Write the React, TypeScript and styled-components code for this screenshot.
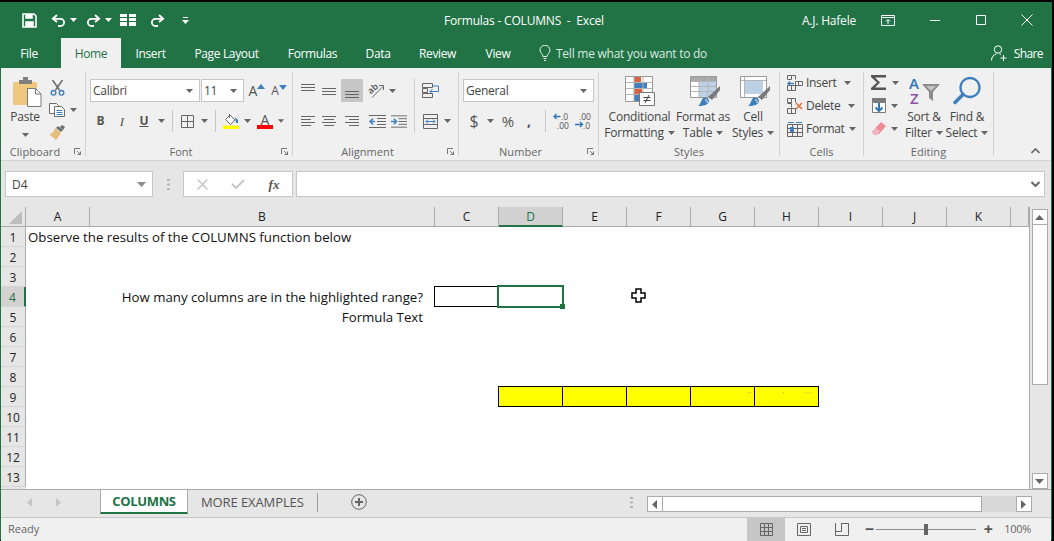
import React from "react";
import styled, { createGlobalStyle } from "styled-components";

const GREEN = "#217346";
const UI_FONT = '"Open Sans", "Noto Sans", sans-serif';

const GlobalStyle = createGlobalStyle`
  html, body {
    margin: 0;
    padding: 0;
    background: #000;
    width: 1054px;
    height: 541px;
    overflow: hidden;
  }
  * { box-sizing: border-box; }
  svg { display: block; }
`;

const Slot = styled.div<{ $w: number; $ml?: number }>`
  flex: none;
  width: ${(p) => p.$w}px;
  margin-left: ${(p) => p.$ml ?? 0}px;
  height: 100%;
  display: flex;
  align-items: center;
  justify-content: center;
`;

/* ---------- icons ---------- */

const Caret = ({ color = "#666" }: { color?: string }) => (
  <svg width="7" height="4" viewBox="0 0 7 4">
    <path d="M0 0h7L3.5 4z" fill={color} />
  </svg>
);

const Save = () => (
  <svg width="15" height="15" viewBox="0 0 15 15" fill="none" stroke="#fff" strokeWidth="1.6">
    <path d="M1 1h11l2 2v11H1z" />
    <path d="M4 1v4h6V1" fill="#fff" />
    <path d="M4 14V9h7v5" fill="#fff" />
  </svg>
);

const Undo = ({ flip }: { flip?: boolean }) => (
  <svg width="15" height="13" viewBox="0 0 15 13" fill="none" stroke="#fff" strokeWidth="1.8" style={flip ? { transform: "scaleX(-1)" } : undefined}>
    <path d="M6 1 1.8 4.8 6 8" />
    <path d="M2 4.8h7.5a3.6 3.6 0 0 1 0 7.2H7" />
  </svg>
);

const Freeze = () => (
  <svg width="16" height="12" viewBox="0 0 16 12" fill="#fff">
    <path d="M0 0h7v3H0zM9 0h7v3H9zM0 4h7v3H0zM9 4h7v3H9zM0 8h7v4H0zM9 8h7v4H9z" />
  </svg>
);

const Customize = () => (
  <svg width="7" height="7" viewBox="0 0 7 7" fill="#fff">
    <path d="M1 0h5v1H1zM0 3h7L3.5 7z" />
  </svg>
);

const RibbonDisplay = () => (
  <svg width="14" height="11" viewBox="0 0 14 11" fill="none" stroke="#fff">
    <path d="M.5.5h13v10H.5zM.5 2.5h13" />
    <path d="M7 9V4.5M5 6.5l2-2 2 2" />
  </svg>
);

const Minimize = () => (
  <svg width="10" height="1" viewBox="0 0 10 1">
    <path d="M0 0h10v1H0z" fill="#fff" />
  </svg>
);

const Maximize = () => (
  <svg width="10" height="10" viewBox="0 0 10 10" fill="none" stroke="#fff">
    <path d="M.5.5h9v9h-9z" />
  </svg>
);

const Close = () => (
  <svg width="12" height="12" viewBox="0 0 12 12" fill="none" stroke="#fff">
    <path d="M.5.5l11 11M11.500.5l-11 11" />
  </svg>
);

const Bulb = () => (
  <svg width="12" height="16" viewBox="0 0 12 16" fill="none" stroke="#e8f1eb">
    <path d="M4 11.500C4 9 1 8 1 5.200a5 5 0 0 1 10 0C11 8 8 9 8 11.500z" />
    <path d="M4.500 13.500h3M5 15.500h2" />
  </svg>
);

const ShareUser = () => (
  <svg width="17" height="16" viewBox="0 0 17 16" fill="none" stroke="#fff">
    <circle cx="7" cy="4.500" r="3.700" />
    <path d="M.5 15.500c0-3.500 2-6 5-6.500M8.500 9l1.500.5" />
    <path d="M12.500 10v6M9.500 13h6" />
  </svg>
);

const PasteIcon = () => (
  <svg width="29" height="31" viewBox="0 0 29 31">
    <rect x="0" y="6" width="24" height="23" rx="1.500" fill="#edc87e" />
    <path d="M6 4h4V1h5v3h4v4H6z" fill="#7f7f7f" />
    <path d="M14.500 12.500h8l5.500 5.500v12.500H14.500z" fill="#fff" stroke="#7a7a7a" />
    <path d="M22.500 12.500V18H28" fill="none" stroke="#7a7a7a" />
  </svg>
);

const Cut = () => (
  <svg width="15" height="16" viewBox="0 0 15 16" fill="none">
    <path d="M2.500 0l7 10M12.500 0l-7 10" stroke="#6d6d6d" strokeWidth="1.600" />
    <circle cx="3.500" cy="12.800" r="2.300" stroke="#3f7fbd" strokeWidth="1.400" />
    <circle cx="11.500" cy="12.800" r="2.300" stroke="#3f7fbd" strokeWidth="1.400" />
  </svg>
);

const Copy = () => (
  <svg width="16" height="14" viewBox="0 0 16 14" fill="#fff" stroke="#6d6d6d">
    <path d="M.5.5h7l2 2v8h-9z" />
    <path d="M5.500 3.500h7l3 3v7h-10z" />
    <path d="M7.500 7.500h6M7.500 9.500h6M7.500 11.500h6" stroke="#3f7fbd" />
  </svg>
);

const Painter = () => (
  <svg width="16" height="15" viewBox="0 0 16 15">
    <path d="M9 1l5 4-2 2-5-4z" fill="#6d6d6d" />
    <path d="M13 0l3 2-2 3-3-3z" fill="#6d6d6d" />
    <path d="M6 3l6 5-5 7-7-6c3 0 5-2 6-6z" fill="#e5bd7a" />
  </svg>
);

const Launcher = () => (
  <svg width="7" height="7" viewBox="0 0 7 7" fill="none" stroke="#777">
    <path d="M.5 6V.5H6" />
    <path d="M3 3l3.500 3.500M6.500 3.500v3h-3" />
  </svg>
);

const GrowFont = ({ up }: { up?: boolean }) => (
  <svg width="8" height="5" viewBox="0 0 8 5">
    <path d={up ? "M0 5h8L4 0z" : "M0 0h8L4 5z"} fill="#3f7fbd" />
  </svg>
);

const Borders = () => (
  <svg width="13" height="13" viewBox="0 0 13 13" fill="none" stroke="#666">
    <path d="M.5.5h12v12H.5zM6.500.5v12M.5 6.500h12" />
  </svg>
);

const FillColor = () => (
  <svg width="16" height="15" viewBox="0 0 16 15">
    <path d="M7 1l5 5-4.500 4.500L2.500 5.500z" fill="#fff" stroke="#666" />
    <path d="M6 0h1v4H6z" fill="#666" />
    <path d="M12 3l3 3v3h-2z" fill="#3f7fbd" />
    <rect y="11.500" width="16" height="3.500" fill="#ffff00" />
  </svg>
);

const FontColorBar = styled.div`
  width: 16px;
  height: 4px;
  background: #ff0000;
  margin-top: -2px;
`;

const Lines = ({ ys, xs, w = 14, h = 14 }: { ys: number[]; xs: [number, number][]; w?: number; h?: number }) => (
  <svg width={w} height={h} viewBox={`0 0 ${w} ${h}`} stroke="#666">
    {ys.map((y, i) => (
      <path key={y} d={`M${xs[i][0]} ${y + 0.5}H${xs[i][1]}`} />
    ))}
  </svg>
);

const full: [number, number] = [0, 14];

const Orientation = () => (
  <svg width="17" height="15" viewBox="0 0 17 15" fill="none" overflow="visible">
    <text x="0.500" y="9" transform="rotate(-42 5.500 6)" fontFamily={UI_FONT} fontSize="9" fontWeight="600" fill="#555">ab</text>
    <path d="M5 14.500L16 3.500" stroke="#666" />
    <path d="M12 2.500h4.500v4.500" stroke="#666" />
  </svg>
);

const Indent = ({ inward }: { inward?: boolean }) => (
  <svg width="17" height="13" viewBox="0 0 17 13" stroke="#666" fill="none">
    <path d="M0 .5h17M0 12.500h17M8 3.500h9M8 6.500h9M8 9.500h9" />
    <path d={inward ? "M0 6.500h5M3 3.500l3 3-3 3" : "M1 6.500h5M4 3.500l-3 3 3 3"} stroke="#3f7fbd" strokeWidth="1.500" />
  </svg>
);

const WrapText = () => (
  <svg width="17" height="16" viewBox="0 0 17 16" fill="none" stroke="#666">
    <path d="M.5.5h10v4H.5zM.5 5.500h5v4h-5zM.5 10.500h10v4H.5z" />
    <path d="M10.500 3h6M16.500 3v5.500H8M10.500 6l-2.500 2.500 2.500 2.500" stroke="#3f7fbd" />
  </svg>
);

const Merge = () => (
  <svg width="15" height="15" viewBox="0 0 15 15" fill="none" stroke="#666">
    <path d="M.5.5h14v14H.5zM.5 4.500h14M.5 10.500h14" />
    <path d="M3 7.500h9M5 5.500l-2 2 2 2M10 5.500l2 2-2 2" stroke="#3f7fbd" />
  </svg>
);

const DecimalIcon = ({ more }: { more?: boolean }) => (
  <svg width="17" height="18" viewBox="0 0 17 18">
    <text x={more ? 4 : 8} y="7.500" fontFamily={UI_FONT} fontSize="8.500" fill="#555">{more ? ".00" : ".0"}</text>
    <text x={more ? 8 : 4} y="16.500" fontFamily={UI_FONT} fontSize="8.500" fill="#555">{more ? ".0" : ".00"}</text>
    <path
      d={more ? "M0 12.500h7M5 10l2.500 2.500L5 15" : "M1 4.500h6.500M3.500 2L1 4.500 3.500 7"}
      stroke="#2f75b5"
      strokeWidth="1.300"
      fill="none"
    />
  </svg>
);

const ConditionalIcon = () => (
  <svg width="30" height="30" viewBox="0 0 30 30">
    <path d="M.5.5h27v25H.5z" fill="#fff" stroke="#999" />
    <path d="M9 1h7v5H9z" fill="#d9633f" />
    <path d="M9 7h13v5H9z" fill="#3f7fbd" />
    <path d="M9 13h8v5H9z" fill="#d9633f" />
    <path d="M9 19h5v6H9z" fill="#3f7fbd" />
    <path d="M1 6.500h26M1 12.500h26M1 18.500h26M9 1v24M18 1v24" stroke="#b5b5b5" />
    <path d="M14.500 16.500h15v13h-15z" fill="#fff" stroke="#777" />
    <path d="M18.500 21.500h7M18.500 24.500h7M24 19l-4 8" stroke="#444" />
  </svg>
);

const Brush = () => (
  <g>
    <path d="M30 10v4l-8 10-4-3z" fill="#7a7a7a" />
    <path d="M13 22c3-1 6 0 6 3s-4 5-11 5c3-2 3-6 5-8z" fill="#3f7fbd" />
    <path d="M15 24c2 0 3 1 2 3" stroke="#fff" fill="none" />
  </g>
);

const TableIcon = () => (
  <svg width="30" height="30" viewBox="0 0 30 30">
    <path d="M.5.500h26v21H.5z" fill="#fff" stroke="#999" />
    <path d="M1 1h25v4H1z" fill="#a9a9a9" />
    <path d="M9 6h17v15H9z" fill="#bdd2e8" />
    <path d="M1 5.500h25M1 10.500h25M1 15.500h25M9 1v20M18 1v20" stroke="#b5b5b5" />
    <Brush />
  </svg>
);

const CellStylesIcon = () => (
  <svg width="30" height="30" viewBox="0 0 30 30">
    <path d="M.5.500h26v21H.5z" fill="#fff" stroke="#999" />
    <path d="M5 5h18v13H5z" fill="#bcd0e6" />
    <path d="M1 4.500h25M4.500 1v20" stroke="#b5b5b5" />
    <Brush />
  </svg>
);

const InsertCells = () => (
  <svg width="16" height="16" viewBox="0 0 16 16" fill="none" stroke="#666">
    <path d="M.5.500h4v4h-4zM4.500.500h4v4M.5 10.500h4v5h-4zM4.500 10.500h4v5h-4z" />
    <path d="M8.500 6.500h7v4h-7zM11.500 6.500v4" />
    <path d="M1 8.500h6M3 6.500l-2 2 2 2" stroke="#3f7fbd" strokeWidth="1.300" />
  </svg>
);

const DeleteCells = () => (
  <svg width="16" height="16" viewBox="0 0 16 16" fill="none" stroke="#666">
    <path d="M.5.500h4v4h-4zM4.500.500h4v4M.5 10.500h4v5h-4zM4.500 10.500h4v5h-4zM.5 5.500h4v4" />
    <path d="M9 5l6 6M15 5l-6 6" stroke="#e2703a" strokeWidth="1.500" />
  </svg>
);

const FormatCells = () => (
  <svg width="16" height="16" viewBox="0 0 16 16" fill="none" stroke="#666">
    <path d="M.5 3.500h15v12H.5zM.5 7.500h15M.5 11.500h15M5.500 3.500v12M10.500 3.500v12" />
    <path d="M3 6h4v5H3z" fill="#3f7fbd" stroke="none" />
    <path d="M1 1.500h6M9 1.500h6" stroke="#3f7fbd" />
  </svg>
);

const Sigma = () => (
  <svg width="16" height="15" viewBox="0 0 16 15">
    <path d="M0 0h15v2.500H4l5 5-5 5h11V15H0v-2l6-5.500L0 2z" fill="#555" />
  </svg>
);

const FillDown = () => (
  <svg width="14" height="15" viewBox="0 0 14 15">
    <path d="M0 0h14v4H0z" fill="#7a7a7a" />
    <path d="M.5 4.500h13v10H.5z" fill="#fff" stroke="#7a7a7a" />
    <path d="M7 5v8M3.500 9.500L7 13l3.500-3.500" stroke="#2f75b5" strokeWidth="2" fill="none" />
  </svg>
);

const Eraser = () => (
  <svg width="14" height="13" viewBox="0 0 14 13">
    <path d="M9 0l5 4-7 8-5 1-2-3z" fill="#ee8a9a" />
    <path d="M0 10l4-4 4 3-3 4H2z" fill="#f4b6c0" />
  </svg>
);

const SortIcon = () => (
  <svg width="31" height="30" viewBox="0 0 31 30">
    <text x="0" y="13" fontFamily={UI_FONT} fontSize="15" fontWeight="600" fill="#2f75b5">A</text>
    <text x="1" y="28" fontFamily={UI_FONT} fontSize="15" fontWeight="600" fill="#8a55a8">Z</text>
    <path d="M13 8h18l-7 8v9l-4-3v-6z" fill="#8c8c8c" />
    <path d="M17 10h10l-5 5z" fill="#c4c4c4" />
  </svg>
);

const FindIcon = () => (
  <svg width="28" height="28" viewBox="0 0 28 28" fill="none">
    <circle cx="17" cy="10.500" r="9.500" stroke="#3f7fbd" strokeWidth="2.300" />
    <path d="M10 17.500l-8 8" stroke="#3f7fbd" strokeWidth="3.500" strokeLinecap="round" />
  </svg>
);

const CollapseChevron = () => (
  <svg width="9" height="6" viewBox="0 0 9 6" fill="none" stroke="#666" strokeWidth="1.600">
    <path d="M.5 5L4.500 1l4 4" />
  </svg>
);

const Cross = () => (
  <svg width="11" height="11" viewBox="0 0 11 11" stroke="#c6c6c6" strokeWidth="1.500">
    <path d="M.5.5l10 10M10.500.5l-10 10" />
  </svg>
);

const Check = () => (
  <svg width="14" height="11" viewBox="0 0 14 11" fill="none" stroke="#c6c6c6" strokeWidth="2">
    <path d="M1 5l4 4 8-8" />
  </svg>
);

const DownChevron = () => (
  <svg width="9" height="6" viewBox="0 0 9 6" fill="none" stroke="#666" strokeWidth="2">
    <path d="M.5 1l4 4 4-4" />
  </svg>
);

const VerticalDots = () => (
  <svg width="3" height="11" viewBox="0 0 3 11" fill="#b5b5b5">
    <path d="M0 0h3v2H0zM0 4.500h3v2H0zM0 9h3v2H0z" />
  </svg>
);

const CornerMark = () => (
  <svg width="13" height="13" viewBox="0 0 13 13">
    <path d="M13 0v13H0z" fill="#bdbdbd" />
  </svg>
);

const Arrow = ({ dir, color = "#666" }: { dir: "up" | "down" | "left" | "right"; color?: string }) => {
  const d = {
    up: "M0 5h9L4.500 0z",
    down: "M0 0h9L4.500 5z",
    left: "M5 0v9L0 4.500z",
    right: "M0 0v9l5-4.500z",
  }[dir];
  const vertical = dir === "up" || dir === "down";
  return (
    <svg width={vertical ? 9 : 5} height={vertical ? 5 : 9} viewBox={vertical ? "0 0 9 5" : "0 0 5 9"}>
      <path d={d} fill={color} />
    </svg>
  );
};

const AddSheet = () => (
  <svg width="16" height="16" viewBox="0 0 16 16" fill="none" stroke="#666">
    <circle cx="8" cy="8" r="7.300" />
    <path d="M4 8h8M8 4v8" strokeWidth="2" />
  </svg>
);

const NormalView = () => (
  <svg width="13" height="13" viewBox="0 0 13 13" fill="none" stroke="#666">
    <path d="M.5.500h12v12H.5zM4.500.500v12M8.500.500v12M.5 4.500h12M.5 8.500h12" />
  </svg>
);

const PageLayoutView = () => (
  <svg width="14" height="13" viewBox="0 0 14 13" fill="none" stroke="#666">
    <path d="M.5.500h13v12H.5zM3.500 3.500h7v6h-7zM5 5.500h4M5 7.500h4" />
  </svg>
);

const PageBreakView = () => (
  <svg width="14" height="13" viewBox="0 0 14 13" fill="none" stroke="#666">
    <path d="M.5 0v12.500h13V0M.5 8.500h6V0M6.500.500h7" />
  </svg>
);

const CursorCross = () => (
  <svg width="15" height="15" viewBox="0 0 15 15">
    <path d="M5 1h5v4h4v5h-4v4H5v-4H1V5h4z" fill="#fff" stroke="#000" strokeWidth="1.500" />
  </svg>
);

/* ---------- window chrome ---------- */

const Window = styled.div`
  width: 1052px;
  height: 538px;
  margin: 2px 2px 1px 0;
  display: flex;
  flex-direction: column;
  border: 1px solid ${GREEN};
  border-top: 0;
  font-family: ${UI_FONT};
  background: #e6e6e6;
`;

const TitleBar = styled.div`
  flex: none;
  height: 36px;
  background: ${GREEN};
  color: #fff;
  display: flex;
  align-items: center;
  font-size: 12px;
`;

const QuickAccess = styled.div`
  flex: none;
  width: 443px;
  height: 36px;
  padding-left: 17px;
  display: flex;
`;

const DocTitle = styled.div`
  white-space: pre;
  letter-spacing: -0.2px;
`;

const Account = styled.div`
  margin-left: auto;
  margin-right: 10px;
  letter-spacing: -0.2px;
`;

const WindowControls = styled.div`
  display: flex;
  height: 36px;
  padding-right: 1px;
`;

const TabRow = styled.div`
  flex: none;
  height: 30px;
  background: ${GREEN};
  display: flex;
  align-items: stretch;
  font-size: 12px;
  color: #fff;
`;

const Tab = styled.div<{ $w: number; $active?: boolean }>`
  width: ${(p) => p.$w}px;
  display: flex;
  align-items: center;
  justify-content: center;
  letter-spacing: -0.35px;
  white-space: nowrap;
  background: ${(p) => (p.$active ? "#f0f0f0" : "transparent")};
  color: ${(p) => (p.$active ? GREEN : "#fff")};
`;

const FileTab = styled(Tab)`
  margin-right: 4px;
`;

const TellMe = styled.div`
  margin-left: 14px;
  display: flex;
  align-items: center;
  gap: 5px;
  color: #dce9e1;
  letter-spacing: -0.25px;
`;

const ShareButton = styled.div`
  margin-left: auto;
  padding-right: 8px;
  display: flex;
  align-items: center;
  gap: 6px;
  letter-spacing: -0.6px;
`;

/* ---------- ribbon ---------- */

const Ribbon = styled.div`
  flex: none;
  height: 93px;
  background: #f0f0f0;
  border-bottom: 1px solid #d2d2d2;
  display: flex;
  font-size: 12px;
  color: #444;
`;

const Group = styled.div<{ $w: number }>`
  flex: none;
  width: ${(p) => p.$w}px;
  height: 92px;
  display: flex;
  flex-direction: column;
`;

const GroupBody = styled.div<{ $pl?: number; $pt?: number }>`
  flex: 1;
  display: flex;
  padding-left: ${(p) => p.$pl ?? 0}px;
  padding-top: ${(p) => p.$pt ?? 0}px;
  min-height: 0;
`;

const GroupLabel = styled.div`
  flex: none;
  height: 17px;
  padding-bottom: 1px;
  display: flex;
  align-items: center;
  font-size: 11px;
  color: #666;
  letter-spacing: 0.05px;
`;

const LabelText = styled.div`
  flex: 1;
  text-align: center;
`;

const LauncherSlot = styled.div`
  flex: none;
  width: 16px;
  display: flex;
  justify-content: center;
`;

const GroupDivider = styled.div`
  flex: none;
  width: 1px;
  margin: 4px 0;
  background: #d2d2d2;
`;

const InnerDivider = styled.div`
  width: 1px;
  height: 22px;
  background: #c6c6c6;
`;

const TallDivider = styled.div`
  flex: none;
  width: 1px;
  height: 55px;
  margin-top: -1px;
  background: #d2d2d2;
`;

const Column = styled.div<{ $w?: number; $mt?: number }>`
  flex: none;
  width: ${(p) => (p.$w ? `${p.$w}px` : "auto")};
  margin-top: ${(p) => p.$mt ?? 0}px;
  display: flex;
  flex-direction: column;
`;

const Row = styled.div<{ $h?: number; $mt?: number }>`
  display: flex;
  align-items: center;
  height: ${(p) => p.$h ?? 23}px;
  margin-top: ${(p) => p.$mt ?? 0}px;
`;

const LargeButton = styled.div<{ $w: number }>`
  flex: none;
  width: ${(p) => p.$w}px;
  display: flex;
  flex-direction: column;
  align-items: center;
  letter-spacing: -0.2px;
  line-height: 16px;
  white-space: nowrap;
`;

const LargeIcon = styled.div<{ $ml?: number }>`
  height: 34px;
  margin-bottom: 1px;
  margin-left: ${(p) => p.$ml ?? 0}px;
  display: flex;
  align-items: center;
  justify-content: center;
`;

const CaretLine = styled.div`
  display: flex;
  align-items: center;
  gap: 4px;
`;

const PasteCaret = styled.div`
  margin-top: 8px;
`;

const SmallTools = styled.div`
  flex: none;
  padding-top: 3px;
  width: 36px;
  display: flex;
  flex-direction: column;
`;

const FieldBox = styled.div<{ $w: number; $ml?: number }>`
  flex: none;
  width: ${(p) => p.$w}px;
  margin-left: ${(p) => p.$ml ?? 0}px;
  height: 23px;
  background: #fff;
  border: 1px solid #c6c6c6;
  display: flex;
  align-items: center;
  justify-content: space-between;
  padding: 0 6px 0 2px;
  font-size: 12px;
  color: #444;
  letter-spacing: -0.25px;
`;

const Glyph = styled.span<{ $size?: number; $bold?: boolean; $italic?: boolean; $underline?: boolean; $serif?: boolean }>`
  font-size: ${(p) => p.$size ?? 12}px;
  font-weight: ${(p) => (p.$bold ? 700 : 400)};
  font-style: ${(p) => (p.$italic ? "italic" : "normal")};
  text-decoration: ${(p) => (p.$underline ? "underline" : "none")};
  font-family: ${(p) => (p.$serif ? '"Liberation Serif", serif' : UI_FONT)};
  color: #555;
  line-height: 1;
`;

const GrowGlyph = styled.div`
  display: flex;
  align-items: flex-start;
  gap: 0;
`;

const ColorGlyph = styled.div`
  display: flex;
  flex-direction: column;
  align-items: center;
`;

const ActiveSlot = styled(Slot)`
  background: #c6c6c6;
  height: 23px;
`;

const CellRow = styled.div`
  display: flex;
  align-items: center;
  height: 23px;
  gap: 3px;
  letter-spacing: -0.3px;
`;

const CellCaret = styled.div<{ $ml: number }>`
  margin-left: ${(p) => p.$ml}px;
  display: flex;
`;

const Collapse = styled.div`
  margin-left: 37px;
  align-self: flex-end;
  height: 16px;
  display: flex;
  align-items: center;
  margin-bottom: 1px;
`;

/* ---------- formula bar ---------- */

const FormulaRow = styled.div`
  flex: none;
  height: 46px;
  padding: 10px 5px 10px 4px;
  display: flex;
  background: #e6e6e6;
`;

const NameBox = styled.div`
  flex: none;
  width: 148px;
  background: #fff;
  border: 1px solid #c6c6c6;
  display: flex;
  align-items: center;
  justify-content: space-between;
  padding: 0 6px 0 6px;
  font-size: 12px;
  color: #444;
`;

const FormulaDots = styled.div`
  flex: none;
  width: 30px;
  display: flex;
  align-items: center;
  justify-content: center;
`;

const FormulaTools = styled.div`
  flex: none;
  width: 110px;
  background: #fff;
  border: 1px solid #c6c6c6;
  display: flex;
  align-items: center;
  padding-left: 0;
`;

const FormulaInput = styled.div`
  flex: none;
  width: 749px;
  margin-left: 3px;
  background: #fff;
  border: 1px solid #c6c6c6;
  display: flex;
  align-items: center;
  justify-content: flex-end;
  padding-right: 4px;
`;

/* ---------- sheet ---------- */

const SheetArea = styled.div`
  flex: none;
  height: 282px;
  display: flex;
  background: #e6e6e6;
`;

const columns = ["A", "B", "C", "D", "E", "F", "G", "H", "I", "J", "K", ""];
const columnWidths = [64, 345, 64, 64, 64, 64, 64, 64, 64, 64, 64, 18];
const rows = Array.from({ length: 13 }, (_, i) => i + 1);

const SheetGrid = styled.div`
  flex: none;
  width: 1029px;
  height: 282px;
  border-right: 1px solid #ababab;
  display: grid;
  grid-template-columns: 25px ${columnWidths.map((w) => `${w}px`).join(" ")};
  grid-template-rows: 20px repeat(13, 20px);
  background: linear-gradient(to right, #e6e6e6 25px, #fff 25px);
  overflow: hidden;
  font-family: "Open Sans", sans-serif;
  font-size: 13.25px;
  color: #111;
`;

const CornerCell = styled.div`
  background: #e6e6e6;
  border-right: 1px solid #ababab;
  border-bottom: 1px solid #ababab;
  display: flex;
  align-items: flex-end;
  justify-content: flex-end;
  padding: 0 3px 2px 0;
`;

const ColumnHead = styled.div<{ $active?: boolean }>`
  background: ${(p) => (p.$active ? "#d2d2d2" : "#e6e6e6")};
  border-right: 1px solid #ababab;
  border-bottom: ${(p) => (p.$active ? `2px solid ${GREEN}` : "1px solid #ababab")};
  color: ${(p) => (p.$active ? GREEN : "#222")};
  display: flex;
  align-items: center;
  justify-content: center;
  font-size: 12px;
`;

const RowHead = styled.div<{ $active?: boolean }>`
  background: ${(p) => (p.$active ? "#d2d2d2" : "#e6e6e6")};
  border-right: ${(p) => (p.$active ? `2px solid ${GREEN}` : "1px solid #ababab")};
  border-bottom: 1px solid #d6d6d6;
  color: ${(p) => (p.$active ? GREEN : "#222")};
  display: flex;
  align-items: center;
  justify-content: center;
  font-size: 12px;
  padding-top: 1px;
`;

const Cell = styled.div<{ $right?: boolean; $indent?: number; $yellow?: boolean; $boxed?: boolean }>`
  position: relative;
  min-width: 0;
  display: flex;
  align-items: center;
  justify-content: ${(p) => (p.$right ? "flex-end" : "flex-start")};
  padding: ${(p) => (p.$right ? `0 ${p.$indent ?? 0}px 0 0` : "0 0 0 2px")};
  white-space: nowrap;
  background: ${(p) => (p.$yellow ? "#ffff00" : "transparent")};
  &::after {
    content: ${(p) => (p.$boxed ? '""' : "none")};
    position: absolute;
    inset: -1px 0 0 -1px;
    border: 1px solid #000;
    pointer-events: none;
  }
`;

const Selection = styled.div`
  position: absolute;
  inset: -2px -1px -1px -2px;
  border: 2px solid ${GREEN};
  z-index: 2;
`;

const FillHandle = styled.div`
  position: absolute;
  right: -3px;
  bottom: -3px;
  width: 5px;
  height: 5px;
  background: ${GREEN};
`;

const Speck = styled.i<{ $x: number }>`
  position: absolute;
  top: 5px;
  left: ${(p) => p.$x}px;
  width: 1px;
  height: 1px;
  background: #e8a060;
  z-index: 1;
`;

const CursorMark = styled.div`
  position: absolute;
  left: 4px;
  top: 1px;
  z-index: 3;
`;

const VScrollbar = styled.div`
  flex: none;
  width: 21px;
  display: flex;
  flex-direction: column;
  align-items: center;
  padding: 2px 2px 0 0;
`;

const ScrollButton = styled.div`
  flex: none;
  width: 16px;
  height: 16px;
  background: #fff;
  border: 1px solid #ababab;
  display: flex;
  align-items: center;
  justify-content: center;
`;

const VThumb = styled.div`
  flex: none;
  width: 16px;
  height: 161px;
  margin-top: -1px;
  background: #fff;
  border: 1px solid #ababab;
`;

const VTrack = styled.div`
  flex: 1;
`;

/* ---------- sheet tabs ---------- */

const TabBar = styled.div`
  flex: none;
  height: 29px;
  background: #e6e6e6;
  border-top: 1px solid #ababab;
  border-bottom: 1px solid #c6c6c6;
  display: flex;
  align-items: flex-start;
  font-size: 13px;
`;

const TabNav = styled.div`
  flex: none;
  width: 99px;
  height: 24px;
  display: flex;
`;

const SheetTab = styled.div<{ $active?: boolean }>`
  flex: none;
  height: 24px;
  display: flex;
  align-items: center;
  justify-content: center;
  width: ${(p) => (p.$active ? "88px" : "auto")};
  background: ${(p) => (p.$active ? "#fff" : "transparent")};
  color: ${(p) => (p.$active ? GREEN : "#555")};
  font-weight: ${(p) => (p.$active ? 700 : 400)};
  border-bottom: ${(p) => (p.$active ? `2px solid ${GREEN}` : "0")};
  border-left: ${(p) => (p.$active ? "1px solid #ababab" : "0")};
  border-right: ${(p) => (p.$active ? "1px solid #ababab" : "0")};
  padding: ${(p) => (p.$active ? "0" : "0 13px")};
  letter-spacing: ${(p) => (p.$active ? "-0.35px" : "-0.1px")};
  white-space: nowrap;
`;

const TabDivider = styled.div`
  flex: none;
  width: 1px;
  height: 19px;
  margin-top: 3px;
  background: #9f9f9f;
`;

const TabTools = styled.div`
  flex: none;
  height: 24px;
  display: flex;
`;

const HScrollbar = styled.div`
  flex: none;
  margin-left: 14px;
  margin-top: 6px;
  display: flex;
  height: 16px;
`;

const HThumb = styled.div`
  width: 320px;
  background: #fff;
  border: 1px solid #ababab;
  margin-left: -1px;
`;

const HTrack = styled.div`
  width: 34px;
  background: #d8d8d8;
`;

/* ---------- status bar ---------- */

const StatusBar = styled.div`
  flex: 1;
  background: #f0f0f0;
  display: flex;
  align-items: stretch;
  font-size: 11px;
  color: #666;
`;

const StatusText = styled.div`
  padding: 0 0 4px 7px;
  display: flex;
  align-items: center;
`;

const StatusTools = styled.div`
  margin-left: auto;
  padding-right: 20px;
  display: flex;
  align-items: stretch;
`;

const ViewButton = styled.div<{ $active?: boolean }>`
  width: 38px;
  padding-bottom: 2px;
  display: flex;
  align-items: center;
  justify-content: center;
  background: ${(p) => (p.$active ? "#c6c6c6" : "transparent")};
`;

const ZoomMark = styled.div<{ $ml: number }>`
  margin-left: ${(p) => p.$ml}px;
  width: 8px;
  padding-bottom: 3px;
  display: flex;
  align-items: center;
  justify-content: center;
  font-size: 16px;
  font-weight: 700;
  color: #555;
`;

const ZoomTrack = styled.div`
  position: relative;
  width: 100px;
  margin: 0 0 2px 3px;
  align-self: center;
  height: 1px;
  background: #8c8c8c;
`;

const ZoomThumb = styled.div`
  position: absolute;
  left: 48px;
  top: -5px;
  width: 4px;
  height: 11px;
  background: #666;
`;

const ZoomValue = styled.div`
  margin-left: 12px;
  padding-bottom: 4px;
  display: flex;
  align-items: center;
  letter-spacing: -0.3px;
`;

const cellContent: Record<string, { text: string; right?: boolean; indent?: number }> = {
  "A1": { text: "Observe the results of the COLUMNS function below" },
  "B4": { text: "How many columns are in the highlighted range?", right: true, indent: 12 },
  "B5": { text: "Formula Text", right: true, indent: 12 },
};

const yellowColumns = ["D", "E", "F", "G", "H"];

const specks: Record<string, number[]> = { G: [57, 59], H: [28, 51, 54] };

export default function App() {
  return (
    <>
      <GlobalStyle />
      <Window>
        <TitleBar>
          <QuickAccess>
            <Slot $w={22}><Save /></Slot>
            <Slot $w={20} $ml={8}><Undo /></Slot>
            <Slot $w={10}><Caret color="#fff" /></Slot>
            <Slot $w={20} $ml={5}><Undo flip /></Slot>
            <Slot $w={10}><Caret color="#fff" /></Slot>
            <Slot $w={24} $ml={3}><Freeze /></Slot>
            <Slot $w={20} $ml={7}><Undo flip /></Slot>
            <Slot $w={10} $ml={13}><Customize /></Slot>
          </QuickAccess>
          <DocTitle>Formulas - COLUMNS  -  Excel</DocTitle>
          <Account>A.J. Hafele</Account>
          <WindowControls>
            <Slot $w={44}><RibbonDisplay /></Slot>
            <Slot $w={46} $ml={2}><Minimize /></Slot>
            <Slot $w={46}><Maximize /></Slot>
            <Slot $w={46}><Close /></Slot>
          </WindowControls>
        </TitleBar>

        <TabRow>
          <FileTab $w={56}>File</FileTab>
          <Tab $w={60} $active>Home</Tab>
          <Tab $w={59}>Insert</Tab>
          <Tab $w={93}>Page Layout</Tab>
          <Tab $w={79}>Formulas</Tab>
          <Tab $w={52}>Data</Tab>
          <Tab $w={67}>Review</Tab>
          <Tab $w={54}>View</Tab>
          <TellMe><Bulb />Tell me what you want to do</TellMe>
          <ShareButton><ShareUser />Share</ShareButton>
        </TabRow>

        <Ribbon>
          <Group $w={84}>
            <GroupBody $pt={6}>
              <LargeButton $w={48}>
                <LargeIcon $ml={4}><PasteIcon /></LargeIcon>
                Paste
                <PasteCaret><Caret /></PasteCaret>
              </LargeButton>
              <SmallTools>
                <Row><Slot $w={16}><Cut /></Slot></Row>
                <Row><Slot $w={16}><Copy /></Slot><Slot $w={16}><Caret /></Slot></Row>
                <Row><Slot $w={16}><Painter /></Slot></Row>
              </SmallTools>
            </GroupBody>
            <GroupLabel><LabelText>Clipboard</LabelText><LauncherSlot><Launcher /></LauncherSlot></GroupLabel>
          </Group>
          <GroupDivider />

          <Group $w={206}>
            <GroupBody $pl={4} $pt={11}>
              <Column>
                <Row>
                  <FieldBox $w={110}>Calibri<Caret /></FieldBox>
                  <FieldBox $w={43} $ml={1}>11<Caret /></FieldBox>
                  <Slot $w={22} $ml={2}><GrowGlyph><Glyph $size={14}>A</Glyph><GrowFont up /></GrowGlyph></Slot>
                  <Slot $w={22}><GrowGlyph><Glyph $size={12}>A</Glyph><GrowFont /></GrowGlyph></Slot>
                </Row>
                <Row $h={24} $mt={7}>
                  <Slot $w={21}><Glyph $bold>B</Glyph></Slot>
                  <Slot $w={22}><Glyph $italic $serif $size={13}>I</Glyph></Slot>
                  <Slot $w={22}><Glyph $underline $bold>U</Glyph></Slot>
                  <Slot $w={12}><Caret /></Slot>
                  <Slot $w={10}><InnerDivider /></Slot>
                  <Slot $w={21}><Borders /></Slot>
                  <Slot $w={12}><Caret /></Slot>
                  <Slot $w={10}><InnerDivider /></Slot>
                  <Slot $w={22}><FillColor /></Slot>
                  <Slot $w={10}><Caret /></Slot>
                  <Slot $w={26}><ColorGlyph><Glyph $size={14}>A</Glyph><FontColorBar /></ColorGlyph></Slot>
                  <Slot $w={6}><Caret /></Slot>
                </Row>
              </Column>
            </GroupBody>
            <GroupLabel><LabelText>Font</LabelText><LauncherSlot><Launcher /></LauncherSlot></GroupLabel>
          </Group>
          <GroupDivider />

          <Group $w={165}>
            <GroupBody $pl={6} $pt={11}>
              <Column $w={115}>
                <Row>
                  <Slot $w={18}><Lines ys={[0, 3, 6]} xs={[full, full, full]} /></Slot>
                  <Slot $w={24}><Lines ys={[4, 7, 10]} xs={[full, full, full]} /></Slot>
                  <ActiveSlot $w={22}><Lines ys={[7, 10, 13]} xs={[full, full, full]} /></ActiveSlot>
                  <Slot $w={25}><Orientation /></Slot>
                  <Slot $w={8}><Caret /></Slot>
                </Row>
                <Row $h={24} $mt={7}>
                  <Slot $w={18}><Lines ys={[1, 4, 7, 10]} xs={[full, [0, 10], full, [0, 10]]} h={12} /></Slot>
                  <Slot $w={24}><Lines ys={[1, 4, 7, 10]} xs={[full, [2, 12], full, [2, 12]]} h={12} /></Slot>
                  <Slot $w={22}><Lines ys={[1, 4, 7, 10]} xs={[full, [4, 14], full, [4, 14]]} h={12} /></Slot>
                  <Slot $w={28}><Indent /></Slot>
                  <Slot $w={16}><Indent inward /></Slot>
                </Row>
              </Column>
              <TallDivider />
              <Column $w={38}>
                <Row><Slot $w={7} /><Slot $w={17}><WrapText /></Slot></Row>
                <Row $h={24} $mt={7}><Slot $w={7} /><Slot $w={17}><Merge /></Slot><Slot $w={16}><Caret /></Slot></Row>
              </Column>
            </GroupBody>
            <GroupLabel><LabelText>Alignment</LabelText><LauncherSlot><Launcher /></LauncherSlot></GroupLabel>
          </Group>
          <GroupDivider />

          <Group $w={139}>
            <GroupBody $pl={4} $pt={11}>
              <Column>
                <Row><FieldBox $w={131}>General<Caret /></FieldBox></Row>
                <Row $h={24} $mt={7}>
                  <Slot $w={22}><Glyph $size={16}>$</Glyph></Slot>
                  <Slot $w={10}><Caret /></Slot>
                  <Slot $w={26}><Glyph $size={15}>%</Glyph></Slot>
                  <Slot $w={16}><Glyph $size={14} $bold>,</Glyph></Slot>
                  <Slot $w={16}><InnerDivider /></Slot>
                  <Slot $w={17}><DecimalIcon /></Slot>
                  <Slot $w={26}><DecimalIcon more /></Slot>
                </Row>
              </Column>
            </GroupBody>
            <GroupLabel><LabelText>Number</LabelText><LauncherSlot><Launcher /></LauncherSlot></GroupLabel>
          </Group>
          <GroupDivider />

          <Group $w={180}>
            <GroupBody $pl={5} $pt={6}>
              <LargeButton $w={71}>
                <LargeIcon><ConditionalIcon /></LargeIcon>
                Conditional
                <CaretLine>Formatting <Caret /></CaretLine>
              </LargeButton>
              <LargeButton $w={56}>
                <LargeIcon $ml={4}><TableIcon /></LargeIcon>
                Format as
                <CaretLine>Table <Caret /></CaretLine>
              </LargeButton>
              <LargeButton $w={44}>
                <LargeIcon $ml={4}><CellStylesIcon /></LargeIcon>
                Cell
                <CaretLine>Styles <Caret /></CaretLine>
              </LargeButton>
            </GroupBody>
            <GroupLabel><LabelText>Styles</LabelText></GroupLabel>
          </Group>
          <GroupDivider />

          <Group $w={83}>
            <GroupBody $pl={7} $pt={3}>
              <Column>
                <CellRow><InsertCells />Insert<CellCaret $ml={4}><Caret /></CellCaret></CellRow>
                <CellRow><DeleteCells />Delete<CellCaret $ml={5}><Caret /></CellCaret></CellRow>
                <CellRow><FormatCells />Format<CellCaret $ml={1}><Caret /></CellCaret></CellRow>
              </Column>
            </GroupBody>
            <GroupLabel><LabelText>Cells</LabelText></GroupLabel>
          </Group>
          <GroupDivider />

          <Group $w={129}>
            <GroupBody $pl={7} $pt={6}>
              <Column $w={34} $mt={-3}>
                <Row><Slot $w={16}><Sigma /></Slot><Slot $w={17}><Caret /></Slot></Row>
                <Row><Slot $w={16}><FillDown /></Slot><Slot $w={15}><Caret /></Slot></Row>
                <Row><Slot $w={16}><Eraser /></Slot><Slot $w={15}><Caret /></Slot></Row>
              </Column>
              <LargeButton $w={38}>
                <LargeIcon><SortIcon /></LargeIcon>
                Sort &amp;
                <CaretLine>Filter <Caret /></CaretLine>
              </LargeButton>
              <LargeButton $w={48}>
                <LargeIcon><FindIcon /></LargeIcon>
                Find &amp;
                <CaretLine>Select <Caret /></CaretLine>
              </LargeButton>
            </GroupBody>
            <GroupLabel><LabelText>Editing</LabelText></GroupLabel>
          </Group>
          <GroupDivider />
          <Collapse><CollapseChevron /></Collapse>
        </Ribbon>

        <FormulaRow>
          <NameBox>D4<Arrow dir="down" color="#8c8c8c" /></NameBox>
          <FormulaDots><VerticalDots /></FormulaDots>
          <FormulaTools>
            <Slot $w={36}><Cross /></Slot>
            <Slot $w={36}><Check /></Slot>
            <Slot $w={36}><Glyph $italic $serif $size={13} $bold>fx</Glyph></Slot>
          </FormulaTools>
          <FormulaInput><DownChevron /></FormulaInput>
        </FormulaRow>

        <SheetArea>
          <SheetGrid>
            <CornerCell><CornerMark /></CornerCell>
            {columns.map((c, i) => (
              <ColumnHead key={i} $active={c === "D"}>{c}</ColumnHead>
            ))}
            {rows.map((r) => (
              <React.Fragment key={r}>
                <RowHead $active={r === 4}>{r}</RowHead>
                {columns.map((c, i) => {
                  const id = `${c}${r}`;
                  const content = cellContent[id];
                  const isYellow = r === 9 && yellowColumns.includes(c);
                  return (
                    <Cell
                      key={i}
                      $right={content?.right}
                      $indent={content?.indent}
                      $yellow={isYellow}
                      $boxed={isYellow || id === "C4"}
                    >
                      {content?.text}
                      {id === "D4" && (
                        <Selection>
                          <FillHandle />
                        </Selection>
                      )}
                      {id === "F4" && (
                        <CursorMark><CursorCross /></CursorMark>
                      )}
                      {r === 9 && specks[c]?.map((x) => <Speck key={x} $x={x} />)}
                    </Cell>
                  );
                })}
              </React.Fragment>
            ))}
          </SheetGrid>
          <VScrollbar>
            <ScrollButton><Arrow dir="up" /></ScrollButton>
            <VThumb />
            <VTrack />
            <ScrollButton><Arrow dir="down" /></ScrollButton>
          </VScrollbar>
        </SheetArea>

        <TabBar>
          <TabNav>
            <Slot $w={8} $ml={24}><Arrow dir="left" color="#c6c6c6" /></Slot>
            <Slot $w={8} $ml={21}><Arrow dir="right" color="#c6c6c6" /></Slot>
          </TabNav>
          <SheetTab $active>COLUMNS</SheetTab>
          <SheetTab>MORE EXAMPLES</SheetTab>
          <TabDivider />
          <TabTools>
            <Slot $w={16} $ml={33}><AddSheet /></Slot>
            <Slot $w={3} $ml={263}><VerticalDots /></Slot>
          </TabTools>
          <HScrollbar>
            <ScrollButton><Arrow dir="left" /></ScrollButton>
            <HThumb />
            <HTrack />
            <ScrollButton><Arrow dir="right" /></ScrollButton>
          </HScrollbar>
        </TabBar>

        <StatusBar>
          <StatusText>Ready</StatusText>
          <StatusTools>
            <ViewButton $active><NormalView /></ViewButton>
            <ViewButton><PageLayoutView /></ViewButton>
            <ViewButton><PageBreakView /></ViewButton>
            <ZoomMark $ml={4}>−</ZoomMark>
            <ZoomTrack><ZoomThumb /></ZoomTrack>
            <ZoomMark $ml={8}>+</ZoomMark>
            <ZoomValue>100%</ZoomValue>
          </StatusTools>
        </StatusBar>
      </Window>
    </>
  );
}
